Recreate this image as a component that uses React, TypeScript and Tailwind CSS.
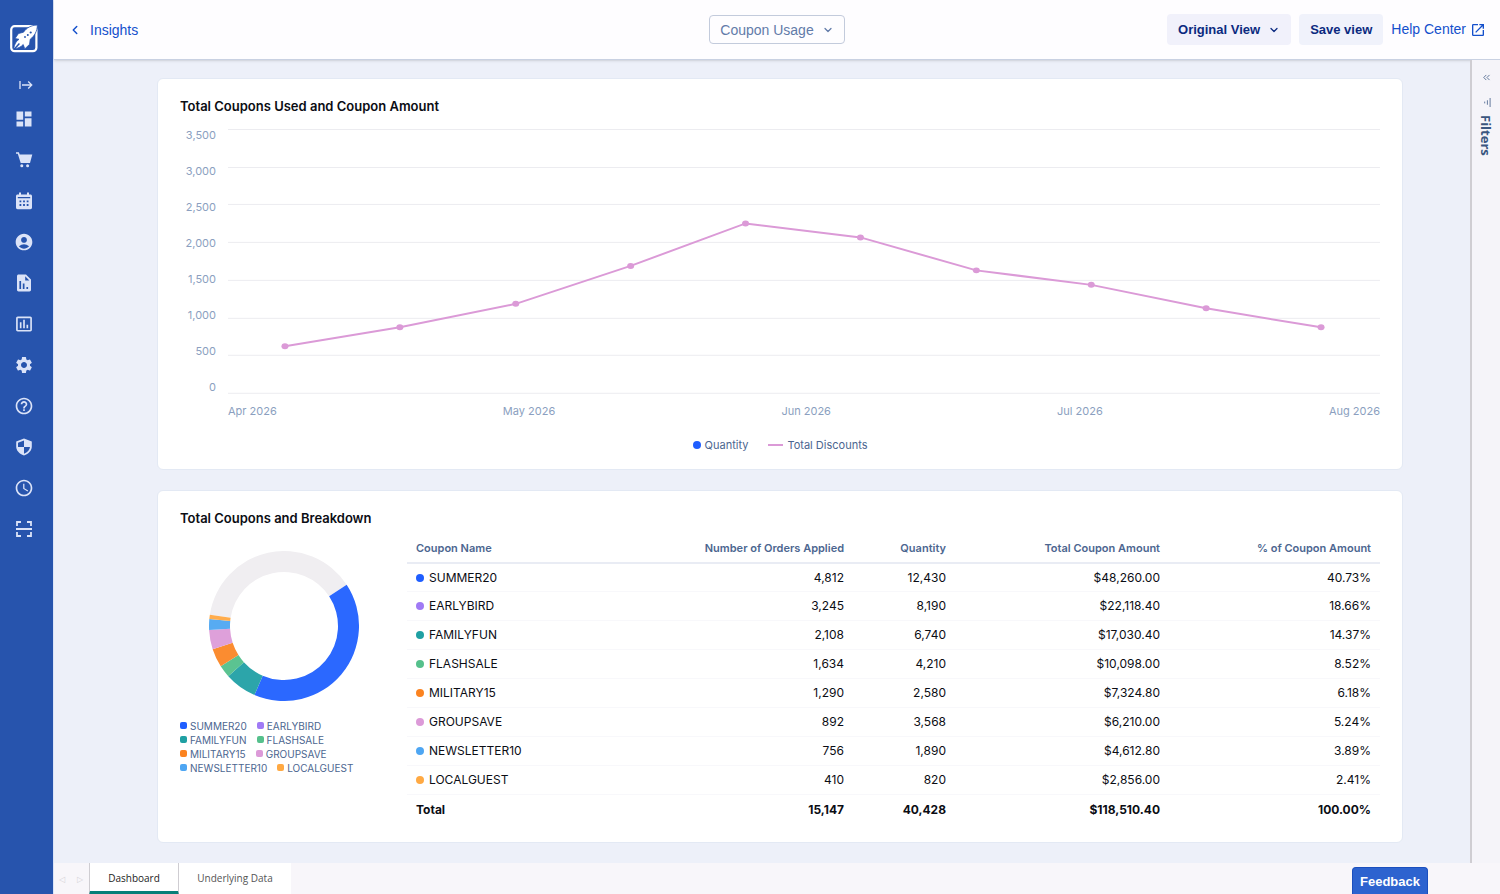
import React from "react";
import {
  MdDashboard,
  MdAccountCircle,
  MdInsertChartOutlined,
  MdSettings,
  MdHelpOutline,
  MdAccessTime,
  MdStart,
  MdOpenInNew,
} from "react-icons/md";
import { LuChevronDown, LuChevronLeft, LuChevronsLeft } from "react-icons/lu";

const CartIcon = () => (
  <svg viewBox="0 0 20 20" className="size-5" fill="currentColor">
    <path d="M2 2.2h2.900l.8 2.300h12.600l-2.300 8.400H6.700L3.800 3.800H2z" />
    <circle cx="7.8" cy="15.800" r="1.5" />
    <circle cx="13.6" cy="15.800" r="1.5" />
  </svg>
);

const CalendarIcon = () => (
  <svg viewBox="0 0 20 20" className="size-5" fill="currentColor">
    <path
      fillRule="evenodd"
      d="M5 1.6h2v1.8h6V1.6h2v1.8h1.4c.9 0 1.6.7 1.6 1.6v11.6c0 .9-.7 1.6-1.6 1.6H3.6c-.9 0-1.6-.7-1.6-1.6V5c0-.9.7-1.6 1.6-1.6H5zM3.8 6v1.3h12.4V6zM5.5 9.4v1.8h1.8V9.4zm3.6 0v1.8h1.8V9.4zm3.6 0v1.8h1.8V9.4zm-7.2 3.7v1.8h1.8v-1.8zm3.6 0v1.8h1.8v-1.8zm3.6 0v1.8h1.8v-1.8z"
    />
  </svg>
);

const ReportIcon = () => (
  <svg viewBox="0 0 20 20" className="size-5" fill="currentColor">
    <path
      fillRule="evenodd"
      d="M4.6 1.6H12L17 6.6v10.2c0 .9-.7 1.6-1.6 1.6H4.6c-.9 0-1.6-.7-1.6-1.6V3.2c0-.9.7-1.6 1.6-1.6zM5.4 8v8h1.7V8zm3.4 2.4V16h1.7v-5.6zm3.6 3.6v2h1.7v-2zM11.2 3.2v4.2h4.2z"
    />
  </svg>
);

const ShieldIcon = () => (
  <svg viewBox="0 0 20 20" className="size-5" fill="currentColor">
    <path
      fillRule="evenodd"
      d="M10 1.600l7.800 3v5c0 4-3 7.300-7.800 9-4.800-1.700-7.800-5-7.800-9v-5zM10 3.500L4 5.800V10h6zm0 6.500v6.700c3.500-1.400 5.700-3.700 6-6.700z"
    />
  </svg>
);

const ScanIcon = () => (
  <svg viewBox="0 0 20 20" className="size-5" fill="none" stroke="currentColor" strokeWidth="1.8">
    <path d="M3 7V3h4M13 3h4v4M3 13v4h4M13 17h4v-4M2 10h16" />
  </svg>
);

const menu = [
  { label: "Dashboard", icon: <MdDashboard className="size-5" /> },
  { label: "Orders", icon: <CartIcon /> },
  { label: "Calendar", icon: <CalendarIcon /> },
  { label: "Customers", icon: <MdAccountCircle className="size-5" /> },
  { label: "Reports", icon: <ReportIcon /> },
  { label: "Insights", icon: <MdInsertChartOutlined className="size-5" /> },
  { label: "Settings", icon: <MdSettings className="size-5" /> },
  { label: "Help", icon: <MdHelpOutline className="size-5" /> },
  { label: "Security", icon: <ShieldIcon /> },
  { label: "History", icon: <MdAccessTime className="size-5" /> },
  { label: "Scan", icon: <ScanIcon /> },
];

const coupons = [
  { name: "SUMMER20", dot: "bg-[#1f5eff]", orders: "4,812", qty: "12,430", amount: "$48,260.00", pct: "40.73%" },
  { name: "EARLYBIRD", dot: "bg-[#a07af5]", orders: "3,245", qty: "8,190", amount: "$22,118.40", pct: "18.66%" },
  { name: "FAMILYFUN", dot: "bg-[#1fa0a3]", orders: "2,108", qty: "6,740", amount: "$17,030.40", pct: "14.37%" },
  { name: "FLASHSALE", dot: "bg-[#55c08c]", orders: "1,634", qty: "4,210", amount: "$10,098.00", pct: "8.52%" },
  { name: "MILITARY15", dot: "bg-[#fb8320]", orders: "1,290", qty: "2,580", amount: "$7,324.80", pct: "6.18%" },
  { name: "GROUPSAVE", dot: "bg-[#dc9ad8]", orders: "892", qty: "3,568", amount: "$6,210.00", pct: "5.24%" },
  { name: "NEWSLETTER10", dot: "bg-[#4ea6f3]", orders: "756", qty: "1,890", amount: "$4,612.80", pct: "3.89%" },
  { name: "LOCALGUEST", dot: "bg-[#ffa943]", orders: "410", qty: "820", amount: "$2,856.00", pct: "2.41%" },
];

// start and end in degrees, clockwise from the top
const slices = [
  { from: 278.7, to: 416.7, color: "#f0eef1" },
  { from: 56.7, to: 203.2, color: "#2b68ff" },
  { from: 203.2, to: 228, color: "#2ca5aa" },
  { from: 228, to: 237.5, color: "#5bc391" },
  { from: 237.5, to: 252, color: "#fb8c30" },
  { from: 252, to: 267, color: "#dea0da" },
  { from: 267, to: 275.4, color: "#57abf2" },
  { from: 275.4, to: 278.7, color: "#ffac4c" },
];

function slicePath(from: number, to: number) {
  const pt = (deg: number, r: number) => {
    const a = (deg * Math.PI) / 180;
    return `${75 + r * Math.sin(a)} ${75 - r * Math.cos(a)}`;
  };
  const large = to - from > 180 ? 1 : 0;
  return `M${pt(from, 75)}A75 75 0 ${large} 1 ${pt(to, 75)}L${pt(to, 54)}A54 54 0 ${large} 0 ${pt(from, 54)}Z`;
}

const yLabels = ["3,500", "3,000", "2,500", "2,000", "1,500", "1,000", "500", "0"];
const xLabels = ["Apr 2026", "May 2026", "Jun 2026", "Jul 2026", "Aug 2026"];
const gridLines = [0, 38, 75, 113, 151, 189, 226, 264];
const points = [
  [57, 217.5], [172, 198.5], [288, 175], [403, 137], [518, 94.5],
  [633, 108.5], [749, 141.5], [864, 156], [979, 179.5], [1094, 198.5],
];

function Sidebar() {
  return (
    <nav className="w-[54px] shrink-0 bg-[#2754ad] border-r border-[#dbe4f8] flex flex-col text-[#dbe3f8]">
      <a href="#" aria-label="Home" className="ml-[9px] mt-6">
        <svg viewBox="0 0 30 30" className="size-[30px]" fill="none">
          <rect x="2.2" y="2.2" width="25.2" height="25" rx="3.5" stroke="#fff" strokeWidth="2.2" />
          <path
            d="M28.4 1C22 1.200 17.600 3.800 14.500 8.200L9.500 9.500 6 14.500l4 .8c-2.800 1.600-4.600 5-5.400 9.600 4.200-.4 7.400-1.800 9.600-4.400l1.600 4.400 4.800-4.600.6-5C25.400 12 28.200 7.500 28.400 1z"
            fill="#fff"
            stroke="#2754ad"
            strokeWidth=".8"
          />
          <path d="M5 25.400l5.400-5.800" stroke="#2754ad" strokeWidth="1.5" />
          <circle cx="16" cy="13" r=".9" fill="#2754ad" />
          <circle cx="18.800" cy="10.900" r="1" fill="#2754ad" />
          <circle cx="21.700" cy="8.500" r="1.100" fill="#2754ad" />
        </svg>
      </a>
      <button aria-label="Expand menu" className="ml-[18px] mt-[23px] size-4">
        <MdStart className="size-4" />
      </button>
      <div className="flex flex-col pr-[5px] mt-[5px]">
        {menu.map((item) => (
          <a key={item.label} href="#" aria-label={item.label} className="h-[41px] flex items-center justify-center">
            {item.icon}
          </a>
        ))}
      </div>
    </nav>
  );
}

function Header() {
  return (
    <header className="h-[60px] shrink-0 bg-[#fefdff] border-b border-[#c9d1e2] shadow-sm grid grid-cols-[1fr_auto_1fr] items-center px-[14px] font-['Liberation_Sans',sans-serif]">
      <a href="#" className="flex items-center gap-2 text-[14px] leading-5 text-[#1450cc]">
        <LuChevronLeft className="size-[14px]" strokeWidth={2.5} />
        Insights
      </a>
      <button className="h-[29px] border border-[#c3cbdc] rounded px-[10px] flex items-center gap-2 text-[14px] leading-5 text-[#627ba9]">
        Coupon Usage
        <LuChevronDown className="size-3" strokeWidth={2.5} />
      </button>
      <div className="flex items-center justify-end gap-2 font-bold text-[13px] text-[#0b2a80]">
        <button className="h-[31px] rounded bg-[#f1f1fb] px-[11px] flex items-center gap-2">
          Original View
          <LuChevronDown className="size-3" strokeWidth={2.5} />
        </button>
        <button className="h-[31px] rounded bg-[#f0f2fb] px-[11px]">Save view</button>
        <a href="#" className="flex items-center gap-1 text-[14px] font-normal text-[#1450cc]">
          Help Center
          <MdOpenInNew className="size-4" />
        </a>
      </div>
    </header>
  );
}

function UsageChart() {
  return (
    <section className="bg-white rounded-md border border-[#e3e9f4] pt-[17px] pb-4 px-[22px]">
      <h2 className="text-[13px] leading-5 font-semibold text-[#0b0d14]">Total Coupons Used and Coupon Amount</h2>
      <div className="flex gap-3 mt-[11px]">
        <div className="w-9 flex flex-col gap-5 text-right text-[11px] leading-4 text-[#8b9fc0]">
          {yLabels.map((label) => (
            <span key={label}>{label}</span>
          ))}
        </div>
        <div className="flex-1 pt-[2px]">
          <svg viewBox="0 0 1153 265" className="block w-full" fill="none">
            {gridLines.map((y) => (
              <path key={y} d={`M0 ${y + 0.5}H1153`} stroke="#ececf0" />
            ))}
            <polyline points={points.map((p) => p.join(",")).join(" ")} stroke="#db9ad7" strokeWidth="2" />
            {points.map(([x, y]) => (
              <ellipse key={x} cx={x} cy={y} rx="3.5" ry="3" fill="#db9ad7" />
            ))}
          </svg>
          <div className="flex justify-between mt-[9px] text-[11px] leading-4 text-[#8b9fc0]">
            {xLabels.map((label) => (
              <span key={label}>{label}</span>
            ))}
          </div>
        </div>
      </div>
      <div className="flex justify-center gap-5 mt-[18px] text-[11px] leading-4 text-[#4c6690]">
        <span className="flex items-center gap-1">
          <i className="size-2 rounded-full bg-[#1f5eff]" />
          Quantity
        </span>
        <span className="flex items-center gap-1">
          <i className="w-[15px] h-[2px] bg-[#db9ad7]" />
          Total Discounts
        </span>
      </div>
    </section>
  );
}

function Breakdown() {
  return (
    <section className="bg-white rounded-md border border-[#e3e9f4] pt-[17px] pb-[18px] px-[22px]">
      <h2 className="text-[13px] leading-5 font-semibold text-[#0b0d14]">Total Coupons and Breakdown</h2>
      <div className="flex">
        <div className="w-[227px] shrink-0 pt-[23px]">
          <svg viewBox="0 0 150 150" className="size-[150px] ml-[29px]">
            {slices.map((s) => (
              <path key={s.color} d={slicePath(s.from, s.to)} fill={s.color} />
            ))}
          </svg>
          <div className="w-[180px] mt-[18px] flex flex-wrap gap-x-[10px] text-[10px] leading-[14px] text-[#4c6690]">
            {coupons.map((c) => (
              <span key={c.name} className="flex items-center gap-[3px]">
                <i className={`size-[7px] rounded-xs ${c.dot}`} />
                {c.name}
              </span>
            ))}
          </div>
        </div>
        <table className="flex-1 mt-[6px] table-fixed text-[12px] text-right text-[#0b0d14] w-full h-fit">
          <thead className="text-[11px] text-[#4c6690]">
            <tr className="h-[29px] border-b-2 border-[#e9ecf4]">
              <th className="w-[220px] pl-[9px] text-left font-semibold">Coupon Name</th>
              <th className="font-semibold">Number of Orders Applied</th>
              <th className="w-[102px] font-semibold">Quantity</th>
              <th className="w-[214px] font-semibold">Total Coupon Amount</th>
              <th className="w-[220px] pr-[9px] font-semibold">% of Coupon Amount</th>
            </tr>
          </thead>
          <tbody>
            {coupons.map((c) => (
              <tr key={c.name} className="h-[29px] border-b border-[#f8f8fb]">
                <td className="pl-[9px]">
                  <span className="flex items-center gap-[5px]">
                    <i className={`size-2 rounded-full ${c.dot}`} />
                    {c.name}
                  </span>
                </td>
                <td>{c.orders}</td>
                <td>{c.qty}</td>
                <td>{c.amount}</td>
                <td className="pr-[9px]">{c.pct}</td>
              </tr>
            ))}
          </tbody>
          <tfoot>
            <tr className="h-[29px] font-bold">
              <td className="pl-[9px] text-left">Total</td>
              <td>15,147</td>
              <td>40,428</td>
              <td>$118,510.40</td>
              <td className="pr-[9px]">100.00%</td>
            </tr>
          </tfoot>
        </table>
      </div>
    </section>
  );
}

function FiltersPane() {
  return (
    <aside className="w-[30px] shrink-0 border-l-2 border-[#cfcdd2] bg-[#f5f4f9] flex flex-col items-center pt-3 text-[#566d94]">
      <button aria-label="Expand filters">
        <LuChevronsLeft className="size-[11px]" />
      </button>
      <svg viewBox="0 0 10 10" className="size-[9px] mt-[15px]" stroke="currentColor">
        <path d="M9 0v10M6 2.5v5M3 4v2" />
      </svg>
      <span className="mt-2 [writing-mode:vertical-rl] font-['Open_Sans',sans-serif] font-bold text-[13px] leading-4 text-[#3a5680]">
        Filters
      </span>
    </aside>
  );
}

export default function App() {
  return (
    <div className="min-h-screen flex font-['Inter',sans-serif]">
      <Sidebar />
      <div className="flex-1 min-w-0 flex flex-col bg-[#edf0f9]">
        <Header />
        <div className="flex-1 flex">
          <main className="flex-1 min-w-0 pl-[103px] pr-[67px] pt-[18px] pb-5 flex flex-col gap-5">
            <UsageChart />
            <Breakdown />
          </main>
          <FiltersPane />
        </div>
        <footer className="h-8 bg-[#f8f6fa] flex items-stretch font-['Open_Sans',sans-serif] text-[10px] text-[#555]">
          <div className="w-[35px] flex items-center justify-end pr-[6px] gap-3 text-[8px] text-[#d5d3d8]">
            <span>◁</span>
            <span>▷</span>
          </div>
          <button className="w-[90px] pt-1 bg-white border-x border-x-[#cfcdd2] border-b-4 border-b-[#087f78] text-[#1c1c1c]">Dashboard</button>
          <button className="w-[112px] bg-white">Underlying Data</button>
          <button className="ml-auto mr-[72px] mt-1 px-[7px] rounded-t bg-[#2d63cf] border border-b-0 border-[#1b4fbe] text-white font-bold text-[13px] font-['Liberation_Sans',sans-serif]">
            Feedback
          </button>
        </footer>
      </div>
    </div>
  );
}
